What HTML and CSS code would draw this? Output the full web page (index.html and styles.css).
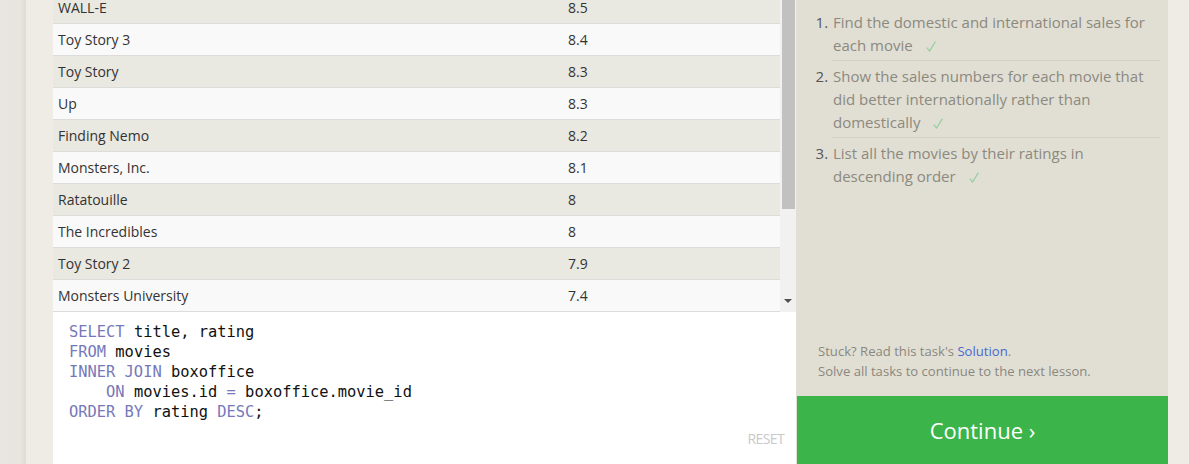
FILE: index.html
```html
<!DOCTYPE html>
<html lang="en">
<head>
<meta charset="utf-8">
<title>SQL Lesson</title>
<link rel="stylesheet" href="styles.css">
</head>
<body>
<div class="page">
  <div class="shade"></div>
  <div class="lesson">
    <div class="workspace">
      <div class="results">
        <div class="table">
          <div class="row odd"><span>WALL-E</span><span>8.5</span></div>
          <div class="row"><span>Toy Story 3</span><span>8.4</span></div>
          <div class="row odd"><span>Toy Story</span><span>8.3</span></div>
          <div class="row"><span>Up</span><span>8.3</span></div>
          <div class="row odd"><span>Finding Nemo</span><span>8.2</span></div>
          <div class="row"><span>Monsters, Inc.</span><span>8.1</span></div>
          <div class="row odd"><span>Ratatouille</span><span>8</span></div>
          <div class="row"><span>The Incredibles</span><span>8</span></div>
          <div class="row odd"><span>Toy Story 2</span><span>7.9</span></div>
          <div class="row"><span>Monsters University</span><span>7.4</span></div>
        </div>
        <div class="scrollbar">
          <div class="thumb"></div>
          <div class="arrow"></div>
        </div>
      </div>
      <div class="editor">
        <div class="code">
          <div class="line"><span class="kw">SELECT</span> title, rating</div>
          <div class="line"><span class="kw">FROM</span> movies</div>
          <div class="line"><span class="kw">INNER JOIN</span> boxoffice</div>
          <div class="line">    <span class="kw">ON</span> movies.id <span class="kw">=</span> boxoffice.movie_id</div>
          <div class="line"><span class="kw">ORDER BY</span> rating <span class="kw">DESC</span>;</div>
        </div>
        <div class="reset">RESET</div>
      </div>
    </div>
    <div class="panel">
      <ol class="tasks">
        <li>Find the domestic and international sales for each movie<svg class="check" viewBox="0 0 10 11" width="10" height="11"><path d="M0.8 6.6 L3.6 10 L9.4 0.6"/></svg></li>
        <li>Show the sales numbers for each movie that did better internationally rather than domestically<svg class="check" viewBox="0 0 10 11" width="10" height="11"><path d="M0.8 6.6 L3.6 10 L9.4 0.6"/></svg></li>
        <li>List all the movies by their ratings in descending order<svg class="check" viewBox="0 0 10 11" width="10" height="11"><path d="M0.8 6.6 L3.6 10 L9.4 0.6"/></svg></li>
      </ol>
      <div class="hints">
        <p>Stuck? Read this task's <a class="link">Solution</a>.</p>
        <p>Solve all tasks to continue to the next lesson.</p>
      </div>
      <div class="continue">Continue ›</div>
    </div>
  </div>
</div>
</body>
</html>
```
FILE: styles.css
```css
html, body {
  margin: 0;
  padding: 0;
  height: 464px;
  overflow: hidden;
  background: #efece6;
  font-family: "Open Sans", "Noto Sans", sans-serif;
}
.page {
  display: flex;
  margin-top: -8px;
  height: 472px;
}
.shade {
  width: 26px;
  flex: none;
  background: linear-gradient(to right, #e9e6e2 0, #e8e5e1 20px, #e0ddd8 25px, #e3e0db 26px);
}
.lesson {
  display: flex;
  padding-left: 27px;
  width: 1115px;
  flex: none;
  background: #efece6;
}
.workspace {
  width: 743px;
  display: flex;
  flex-direction: column;
}
.results {
  display: flex;
  height: 320px;
}
.table {
  width: 727px;
}
.row {
  display: grid;
  grid-template-columns: 510px 1fr;
  height: 31px;
  border-bottom: 1px solid #dcdcdb;
  background: #f9f9f9;
  font-size: 14px;
  line-height: 31px;
  color: #333;
  padding-left: 5px;
}
.row.odd {
  background: #e9e8e1;
}
.scrollbar {
  width: 16px;
  background: #f1f1f1;
  display: flex;
  flex-direction: column;
  align-items: center;
}
.thumb {
  width: 13px;
  height: 217px;
  background: #c1c1c1;
  margin-left: 1px;
}
.arrow {
  margin-top: auto;
  margin-bottom: 9px;
  width: 0;
  height: 0;
  border-left: 4px solid transparent;
  border-right: 4px solid transparent;
  border-top: 4px solid #505050;
}
.editor {
  flex: 1;
  background: #fff;
  position: relative;
  padding: 10px 16px 0;
}
.code {
  font-family: "DejaVu Sans Mono", "Liberation Mono", monospace;
  font-size: 15.4px;
  color: #111;
}
.line {
  white-space: pre;
  height: 20px;
  line-height: 20px;
}
.kw {
  color: #7678b9;
}
.reset {
  position: absolute;
  right: 12px;
  bottom: 17px;
  font-size: 14px;
  line-height: 16px;
  color: #c9c9c9;
  letter-spacing: -0.6px;
}
.panel {
  width: 372px;
  background: #e1dfd4;
  display: flex;
  flex-direction: column;
}
.tasks {
  margin: 19px 8px 0 36px;
  padding: 0;
  font-size: 15px;
  line-height: 23px;
  color: #8c897f;
}
.tasks li {
  padding: 4px 0 3px 1px;
  border-top: 1px solid #d3d1c7;
}
.tasks li:first-child {
  border-top: 0;
  padding-top: 0;
}
.tasks li::marker {
  color: #555;
}
.check {
  margin-left: 13px;
  vertical-align: -1px;
  fill: none;
  stroke: #95cf9f;
  stroke-width: 1.2;
}
.hints {
  margin: auto 0 15px 22px;
  font-size: 13.1px;
  line-height: 20px;
  color: #8a877e;
}
.hints p {
  margin: 0;
}
.link {
  color: #4768d6;
}
.continue {
  height: 68px;
  background: #3bb54a;
  color: #fff;
  font-size: 22px;
  line-height: 68px;
  text-align: center;
  margin-left: 1px;
}
```
